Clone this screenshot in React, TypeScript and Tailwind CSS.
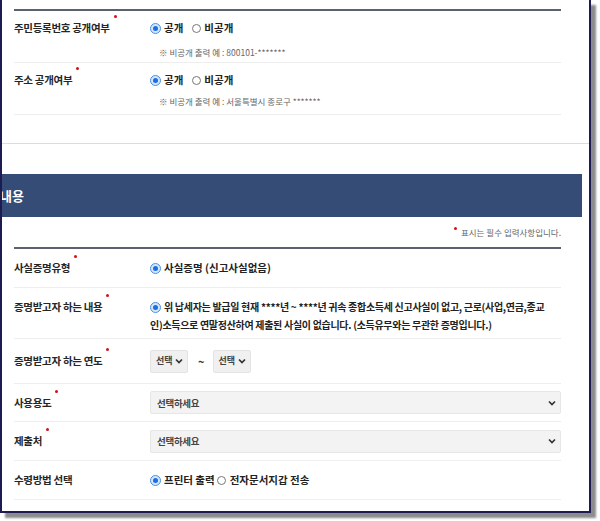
const font = { fontFamily: '"Noto Sans CJK KR", "Noto Sans", sans-serif' };

const Req = () => (
  <span className="absolute -right-[7px] -top-[6px] h-[3px] w-[3px] rounded-full bg-[#d0101b]" />
);

const Label = ({ text, req = true }: { text: string; req?: boolean }) => (
  <div className="flex w-[136px] shrink-0 items-center text-[10.5px] leading-[14px]">
    <span className="relative font-bold tracking-[-0.3px] text-[#262626]">
      {text}
      {req && <Req />}
    </span>
  </div>
);

const Radio = ({ checked }: { checked?: boolean }) =>
  checked ? (
    <span className="inline-flex h-[11px] w-[11px] shrink-0 items-center justify-center rounded-full border border-[#4d8fe0] bg-[#d6e6fa]">
      <span className="block h-[5px] w-[5px] rounded-full bg-[#1b6fe0]" />
    </span>
  ) : (
    <span className="inline-block h-[9px] w-[9px] shrink-0 rounded-full border border-[#777] bg-white" />
  );

const Chevron = () => (
  <svg width="8" height="6" viewBox="0 0 8 6" className="shrink-0">
    <path d="M1 1.5 L4 4.5 L7 1.5" fill="none" stroke="#333" strokeWidth="1.7" />
  </svg>
);

const Sep = () => <div className="h-px w-full bg-[#eeeeee]" />;

const BigSelect = () => (
  <div className="flex h-[23px] w-[411px] items-center justify-between rounded-[2px] border border-[#e6e6e6] bg-[#f3f3f3] pl-[6px] pr-[4px]">
    <span className="text-[9.5px] font-bold leading-[12px] tracking-[-0.3px] text-[#444]">선택하세요</span>
    <Chevron />
  </div>
);

const SmallSelect = () => (
  <div className="flex h-[23px] w-[38px] items-center justify-between rounded-[2px] border border-[#e3e3e3] bg-[#f0f0f0] pl-[5px] pr-[4px]">
    <span className="text-[9px] font-bold leading-[12px] text-[#444]">선택</span>
    <Chevron />
  </div>
);

export default function App() {
  return (
    <div className="h-[521px] w-[600px] overflow-hidden bg-white" style={font}>
      <div className="h-[513px] w-[591px] overflow-hidden border-x-2 border-b-2 border-[#1c1c52] bg-white shadow-[5px_5px_2px_rgba(0,0,0,0.45)]">
        {/* top form */}
        <div className="w-[559px] pl-[12px]">
          <div className="mt-[9px] h-[2px] w-full bg-[#5a6272]" />
          <div className="flex h-[51px] pt-[9px]">
            <div className="flex h-[16px] items-center">
              <Label text="주민등록번호 공개여부" />
            </div>
            <div>
              <div className="flex h-[16px] items-center text-[10.5px] font-bold leading-[14px] text-[#222]">
                <Radio checked />
                <span className="ml-[3px]">공개</span>
                <span className="ml-[9px] flex items-center"><Radio /></span>
                <span className="ml-[3px]">비공개</span>
              </div>
              <div className="ml-[9px] mt-[10px] text-[8.5px] leading-[12px] text-[#666]">※ 비공개 출력 예 : 800101-*******</div>
            </div>
          </div>
          <Sep />
          <div className="flex h-[51px] pt-[9px]">
            <div className="flex h-[16px] items-center">
              <Label text="주소 공개여부" />
            </div>
            <div>
              <div className="flex h-[16px] items-center text-[10.5px] font-bold leading-[14px] text-[#222]">
                <Radio checked />
                <span className="ml-[3px]">공개</span>
                <span className="ml-[9px] flex items-center"><Radio /></span>
                <span className="ml-[3px]">비공개</span>
              </div>
              <div className="ml-[9px] mt-[7px] text-[8.5px] leading-[12px] text-[#666]">※ 비공개 출력 예 : 서울특별시 종로구 *******</div>
            </div>
          </div>
          <Sep />
        </div>

        <div className="mt-[28px] h-px w-full bg-[#dcdcdc]" />
        <div className="mt-[30px] flex h-[43px] w-[580px] items-center bg-[#354c77]">
          <span className="-ml-[2px] text-[13px] font-bold leading-[16px] text-white">내용</span>
        </div>

        {/* bottom form */}
        <div className="w-[559px] pl-[12px]">
          <div className="mt-[9px] flex h-[12px] items-center justify-end text-[8.5px] leading-[12px] text-[#666]">
            <span className="relative mr-[4px] h-[3px] w-[3px] -translate-y-[4px] rounded-full bg-[#d0101b]" />
            표시는 필수 입력사항입니다.
          </div>
          <div className="mt-[9px] h-[2px] w-full bg-[#5a6272]" />

          <div className="flex h-[38px] items-center">
            <Label text="사실증명유형" />
            <div className="flex items-center text-[10.5px] font-bold leading-[14px] text-[#222]">
              <Radio checked />
              <span className="ml-[3px]">사실증명 (신고사실없음)</span>
            </div>
          </div>
          <Sep />

          <div className="flex h-[50px] pt-[10px]">
            <div className="flex h-[18px] items-center">
              <Label text="증명받고자 하는 내용" />
            </div>
            <div className="whitespace-nowrap text-[10px] font-bold leading-[18px] tracking-[-0.3px] text-[#222]">
              <div className="flex items-center">
                <Radio checked />
                <span className="ml-[3px]">위 납세자는 발급일 현재 ****년 ~ ****년 귀속 종합소득세 신고사실이 없고, 근로(사업,연금,종교</span>
              </div>
              <div>인)소득으로 연말정산하여 제출된 사실이 없습니다. (소득유무와는 무관한 증명입니다.)</div>
            </div>
          </div>
          <Sep />

          <div className="flex h-[44px] items-center">
            <Label text="증명받고자 하는 연도" />
            <div className="flex items-center">
              <SmallSelect />
              <span className="ml-[10px] mr-[8px] text-[11px] font-bold leading-[14px] text-[#333]">~</span>
              <SmallSelect />
            </div>
          </div>
          <Sep />

          <div className="flex h-[37px] items-center">
            <Label text="사용용도" />
            <BigSelect />
          </div>
          <Sep />

          <div className="flex h-[38px] items-center">
            <Label text="제출처" />
            <BigSelect />
          </div>
          <Sep />

          <div className="flex h-[38px] items-center">
            <Label text="수령방법 선택" req={false} />
            <div className="flex items-center text-[10.5px] font-bold leading-[14px] text-[#222]">
              <Radio checked />
              <span className="ml-[3px]">프린터 출력</span>
              <span className="ml-[2px] flex items-center"><Radio /></span>
              <span className="ml-[4px]">전자문서지갑 전송</span>
            </div>
          </div>
          <Sep />
        </div>
      </div>
    </div>
  );
}
